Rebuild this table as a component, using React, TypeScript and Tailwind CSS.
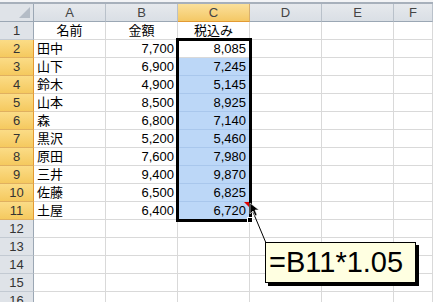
import React from 'react';

const rows: [string, string, string][] = [
  ['田中', '7,700', '8,085'],
  ['山下', '6,900', '7,245'],
  ['鈴木', '4,900', '5,145'],
  ['山本', '8,500', '8,925'],
  ['森', '6,800', '7,140'],
  ['黒沢', '5,200', '5,460'],
  ['原田', '7,600', '7,980'],
  ['三井', '9,400', '9,870'],
  ['佐藤', '6,500', '6,825'],
  ['土屋', '6,400', '6,720'],
];

const cols = ['A', 'B', 'C', 'D', 'E', 'F'];
const font = { fontFamily: '"Liberation Sans", "Noto Sans CJK JP", sans-serif' };

const RowHead = ({ n, on }: { n: number; on: boolean }) => (
  <div
    className={
      'h-[18px] w-[34px] shrink-0 flex items-center justify-center text-[13px] text-[#333] border-r border-b ' +
      (on
        ? 'bg-gradient-to-b from-[#fbdc86] to-[#f5c95e] border-r-[#e29a33] border-b-[#e0b060]'
        : 'bg-[#dfe3e8] border-r-[#9ba7b4] border-b-[#c3cad2]')
    }
  >
    {n}
  </div>
);

const Cell = ({
  children,
  align = 'left',
  sel = false,
  active = false,
  w = 'w-[72px]',
}: {
  children?: React.ReactNode;
  align?: 'left' | 'right' | 'center';
  sel?: boolean;
  active?: boolean;
  w?: string;
}) => (
  <div
    className={
      'h-[18px] shrink-0 flex items-center px-[3px] text-[13px] text-black border-r border-b ' +
      w +
      (align === 'right' ? ' justify-end' : align === 'center' ? ' justify-center' : ' justify-start') +
      (sel && !active ? ' bg-[#bcd7f7] border-[#a9c7ec]' : ' border-[#d9d9d9]')
    }
  >
    {children}
  </div>
);

export default function App() {
  return (
    <div className="relative w-[433px] h-[302px] overflow-hidden bg-white select-none" style={font}>
      <div className="h-[2px] bg-[#f3f4f6]" />
      <div className="h-[2px] bg-[#a7b0bb]" />

      {/* column headers */}
      <div className="flex h-[18px]">
        <div className="relative w-[34px] shrink-0 bg-[#dfe3e8] border-r border-b border-[#9ba7b4]">
          <div className="absolute right-[3px] bottom-[3px] w-0 h-0 border-l-[11px] border-l-transparent border-b-[11px] border-b-[#b4bcc6]" />
        </div>
        {cols.map((c) => (
          <div
            key={c}
            className={
              'shrink-0 flex items-center justify-center text-[13px] text-[#444] border-r border-b ' +
              (c === 'F' ? 'flex-1 ' : 'w-[72px] ') +
              (c === 'C'
                ? 'bg-gradient-to-b from-[#fbe09a] to-[#f4c865] border-r-[#d7b070] border-b-[#e29a33]'
                : 'bg-gradient-to-b from-[#e6e9ed] to-[#dadfe5] border-r-[#b9c1ca] border-b-[#9ba7b4]')
            }
          >
            {c}
          </div>
        ))}
      </div>

      {/* row 1 */}
      <div className="flex">
        <RowHead n={1} on={false} />
        <Cell align="center">名前</Cell>
        <Cell align="center">金額</Cell>
        <Cell align="center">税込み</Cell>
        <Cell />
        <Cell />
        <Cell w="flex-1" />
      </div>

      {rows.map(([name, amt, tax], i) => (
        <div key={i} className="flex">
          <RowHead n={i + 2} on={true} />
          <Cell>{name}</Cell>
          <Cell align="right">{amt}</Cell>
          <Cell align="right" sel active={i === 0}>
            {tax}
          </Cell>
          <Cell />
          <Cell />
          <Cell w="flex-1" />
        </div>
      ))}

      {[12, 13, 14, 15, 16].map((n) => (
        <div key={n} className="flex">
          <RowHead n={n} on={false} />
          <Cell />
          <Cell />
          <Cell />
          <Cell />
          <Cell />
          <Cell w="flex-1" />
        </div>
      ))}

      {/* selection outline */}
      <div className="absolute left-[176px] top-[38px] w-[76px] h-[184px] border-[3px] border-black" />
      <div className="absolute left-[247px] top-[217px] w-[6px] h-[6px] bg-black border border-white" />
      <div className="absolute left-[244px] top-[202px] w-0 h-0 border-l-[5px] border-l-transparent border-t-[5px] border-t-[#e00000]" />

      {/* cursor + leader line */}
      <svg className="absolute left-0 top-0" width="433" height="302">
        <line x1="253" y1="212" x2="266" y2="243" stroke="black" strokeWidth="1" />
        <path d="M250 203 L250 214 L253 211 L255 216 L257 215 L255 210 L259 210 Z" fill="black" stroke="white" strokeWidth="0.6" />
      </svg>

      {/* formula tooltip */}
      <div className="absolute left-[265px] top-[242px] w-[151px] h-[41px] bg-[#ffffe1] border border-black shadow-[3px_3px_0_0_#000] flex items-center pl-[3px]">
        <span className="text-[29px] leading-none text-black" style={{ fontFamily: '"Liberation Sans", Arial, sans-serif' }}>
          =B11*1.05
        </span>
      </div>
    </div>
  );
}
